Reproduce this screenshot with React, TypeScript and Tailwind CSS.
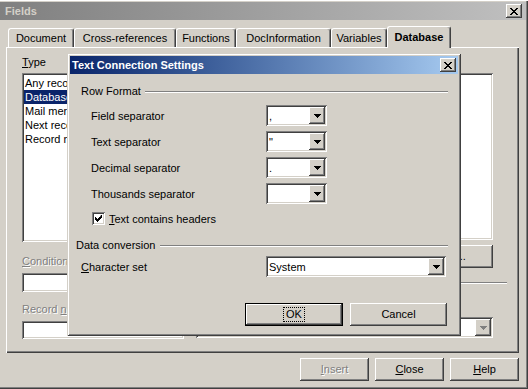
import React from "react";

const raised =
  "shadow-[inset_-1px_-1px_0_#404040,inset_1px_1px_0_#ffffff,inset_-2px_-2px_0_#808080,inset_2px_2px_0_#d4d0c8]";
const sunken =
  "shadow-[inset_1px_1px_0_#808080,inset_-1px_-1px_0_#ffffff,inset_2px_2px_0_#404040,inset_-2px_-2px_0_#d4d0c8]";
const disabledText = "text-[#808080] [text-shadow:1px_1px_0_#ffffff]";

function Arrow({ disabled }: { disabled?: boolean }) {
  return (
    <svg width="7" height="4" viewBox="0 0 7 4" className="block">
      <path
        d="M0 0h7v1h-1v1h-1v1h-1v1h-1v-1h-1v-1h-1v-1h-1z"
        fill={disabled ? "#808080" : "#000000"}
      />
    </svg>
  );
}

function Combo({
  width,
  value,
  disabled,
  className = "",
}: {
  width: string;
  value?: string;
  disabled?: boolean;
  className?: string;
}) {
  return (
    <div className={`${width} h-[21px] bg-white p-[2px] flex ${sunken} ${className}`}>
      <div className="flex-1 pl-[1px] leading-[18px] overflow-hidden whitespace-nowrap">
        {value}
      </div>
      <div className={`w-[16px] h-[17px] bg-[#d4d0c8] flex items-center justify-center ${raised}`}>
        <Arrow disabled={disabled} />
      </div>
    </div>
  );
}

function CloseBox() {
  return (
    <div className={`w-[16px] h-[14px] bg-[#d4d0c8] flex items-center justify-center ${raised}`}>
      <svg width="8" height="7" viewBox="0 0 8 7" className="block">
        <path
          d="M0 0h2v1h1v1h2v-1h1v-1h2v1h-1v1h-1v1h-1v1h1v1h1v1h1v1h-2v-1h-1v-1h-2v1h-1v1h-2v-1h1v-1h1v-1h1v-1h-1v-1h-1v-1h-1z"
          fill="#000"
        />
      </svg>
    </div>
  );
}

function GroupHeading({ label, pl }: { label: string; pl: string }) {
  return (
    <div className={`flex items-center h-[13px] ${pl} pr-[10px]`}>
      <span className="leading-[13px] pr-[4px]">{label}</span>
      <div className="flex-1 border-t border-[#808080] border-b border-b-white" />
    </div>
  );
}

function Tab({ label, width, selected }: { label: string; width: string; selected?: boolean }) {
  return (
    <div
      className={`${width} ${
        selected ? "h-[22px] -mb-[1px] relative z-10 font-bold" : "h-[19px]"
      } bg-[#d4d0c8] rounded-t-[3px] border-t border-l border-white border-r border-r-[#404040] shadow-[inset_-1px_0_0_#808080] flex items-center justify-center leading-[13px]`}
    >
      {label}
    </div>
  );
}

const separators = [
  { label: "Field separator", value: "," },
  { label: "Text separator", value: '"' },
  { label: "Decimal separator", value: "." },
  { label: "Thousands separator", value: "" },
];

export default function App() {
  return (
    <div className="relative w-[528px] h-[389px] overflow-hidden bg-[#d4d0c8] text-[11px] text-black font-['Liberation_Sans',Arial,sans-serif] shadow-[inset_0_1px_0_#ffffff,inset_-1px_-1px_0_#404040,inset_-2px_-2px_0_#808080] flex flex-col">
      {/* window title */}
      <div className="mt-[2px] mr-[2px] h-[18px] bg-gradient-to-r from-[#808080] to-[#c0c0c0] flex items-center pl-[5px] pr-[4px]">
        <span className="font-bold text-[#d4d0c8] leading-[13px] pt-[1px]">Fields</span>
        <div className="ml-auto">
          <CloseBox />
        </div>
      </div>

      {/* tabs */}
      <div className="mt-[6px] h-[21px] pl-[8px] flex items-end">
        <Tab label="Document" width="w-[66px]" />
        <Tab label="Cross-references" width="w-[102px]" />
        <Tab label="Functions" width="w-[60px]" />
        <Tab label="DocInformation" width="w-[95px]" />
        <Tab label="Variables" width="w-[56px]" />
        <Tab label="Database" width="w-[64px]" selected />
      </div>

      {/* tab panel */}
      <div className="ml-[6px] w-[513px] h-[306px] flex shadow-[inset_1px_1px_0_#ffffff,inset_-1px_-1px_0_#404040,inset_-2px_-2px_0_#808080]">
        <div className="w-[178px] pl-[16px] pt-[9px] flex flex-col">
          <div className="h-[13px] leading-[13px]">
            <span className="underline">T</span>ype
          </div>
          <div className={`mt-[4px] h-[169px] bg-white p-[2px] pt-[3px] overflow-hidden ${sunken}`}>
            {["Any record", "Database", "Mail merge", "Next record", "Record nr."].map((item, i) => (
              <div
                key={item}
                className={`h-[14px] leading-[14px] pl-[1px] whitespace-nowrap ${
                  i === 1 ? "bg-[#0a246a] text-white" : ""
                }`}
              >
                {item}
              </div>
            ))}
          </div>
          <div className={`mt-[13px] h-[13px] leading-[13px] ${disabledText}`}>
            <span className="underline">C</span>ondition
          </div>
          <div className={`mt-[5px] h-[19px] bg-white ${sunken}`} />
          <div className={`mt-[11px] h-[13px] leading-[13px] ${disabledText}`}>
            Record <span className="underline">n</span>umber
          </div>
          <div className={`mt-[5px] h-[18px] bg-white ${sunken}`} />
        </div>

        <div className="flex-1 pl-[12px] pr-[26px] pt-[26px] flex flex-col">
          <div className={`h-[167px] bg-white ${sunken}`} />
          <div
            className={`mt-[5px] ml-auto w-[100px] h-[23px] flex items-center justify-center leading-[13px] ${raised}`}
          >
            Browse...
          </div>
          <div className="mt-[14px] -mr-[14px] flex items-center h-[2px]">
            <div className="flex-1 border-t border-[#808080] border-b border-b-white" />
          </div>
          <Combo width="w-full" className="mt-[33px]" disabled />
        </div>
      </div>

      {/* bottom buttons */}
      <div className="mt-[5px] pr-[9px] flex justify-end gap-[6px]">
        <div className={`w-[69px] h-[23px] flex items-center justify-center leading-[13px] ${raised} ${disabledText}`}>
          <span className="underline">I</span>nsert
        </div>
        <div className={`w-[69px] h-[23px] flex items-center justify-center leading-[13px] ${raised}`}>
          <span className="underline">C</span>lose
        </div>
        <div className={`w-[69px] h-[23px] flex items-center justify-center leading-[13px] ${raised}`}>
          <span className="underline">H</span>elp
        </div>
      </div>

      {/* modal dialog */}
      <div className="absolute left-[67px] top-[53px] w-[394px] h-[283px] bg-[#d4d0c8] p-[3px] flex flex-col shadow-[inset_1px_1px_0_#d4d0c8,inset_-1px_-1px_0_#404040,inset_2px_2px_0_#ffffff,inset_-2px_-2px_0_#808080]">
        <div className="h-[18px] bg-gradient-to-r from-[#0a246a] to-[#a6caf0] flex items-center pl-[2px] pr-[2px]">
          <span className="font-bold text-white leading-[13px] pt-[1px]">Text Connection Settings</span>
          <div className="ml-auto">
            <CloseBox />
          </div>
        </div>

        <div className="mt-[11px]">
          <GroupHeading label="Row Format" pl="pl-[11px]" />
        </div>

        <div className="mt-[7px] flex flex-col gap-[5px]">
          {separators.map((s) => (
            <div key={s.label} className="flex items-center h-[21px] pl-[21px]">
              <div className="w-[175px] leading-[13px] pt-[1px]">{s.label}</div>
              <Combo width="w-[61px]" value={s.value} />
            </div>
          ))}
        </div>

        <div className="mt-[8px] h-[13px] pl-[22px] flex items-center">
          <div className={`w-[13px] h-[13px] bg-white flex items-center justify-center ${sunken}`}>
            <svg width="7" height="7" viewBox="0 0 7 7" className="block">
              <path d="M6 0h1v3h-1v1h-1v1h-1v1h-1v1h-1v-1h-1v-1h-1v-3h1v1h1v1h1v-1h1v-1h1z" fill="#000" />
            </svg>
          </div>
          <span className="ml-[4px] leading-[13px] pt-[2px]">
            <span className="underline">T</span>ext contains headers
          </span>
        </div>

        <div className="mt-[14px]">
          <GroupHeading label="Data conversion" pl="pl-[6px]" />
        </div>

        <div className="mt-[4px] flex items-center h-[21px] pl-[11px]">
          <div className="w-[185px] leading-[13px] pt-[1px]">
            <span className="underline">C</span>haracter set
          </div>
          <Combo width="w-[180px]" value="System" />
        </div>

        <div className="mt-[26px] pr-[11px] flex justify-end gap-[7px]">
          <div className="w-[98px] h-[23px] border border-black">
            <div className={`w-full h-full flex items-center justify-center ${raised}`}>
              <span className="border border-dotted border-black px-[2px] leading-[13px]">OK</span>
            </div>
          </div>
          <div className={`w-[97px] h-[23px] flex items-center justify-center leading-[13px] ${raised}`}>
            Cancel
          </div>
        </div>
      </div>
    </div>
  );
}
